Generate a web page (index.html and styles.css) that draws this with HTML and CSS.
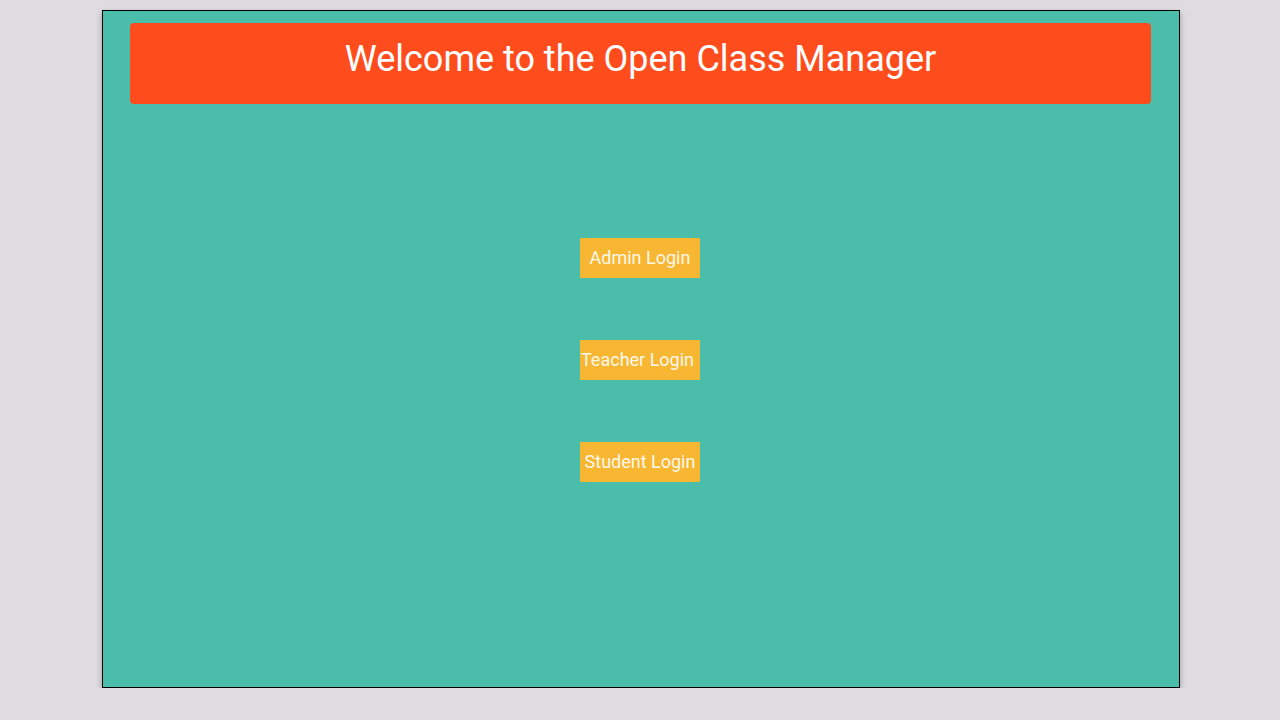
FILE: index.html
```html
<!DOCTYPE html>
<html>
<head>
<meta charset="utf-8">
<link rel="stylesheet" href="styles.css">
</head>
<body>
<div class="frame">
  <header class="banner">
    <h1 class="title">Welcome to the Open Class Manager</h1>
  </header>
  <div class="logins">
    <button class="login">Admin Login</button>
    <button class="login login-wide">Teacher Login</button>
    <button class="login">Student Login</button>
  </div>
</div>
</body>
</html>
```

FILE: styles.css
```css
html, body {
  margin: 0;
  padding: 0;
  background: #dfdce1;
  font-family: Roboto, "Liberation Sans", sans-serif;
}
body {
  padding-top: 10px;
}
.frame {
  box-sizing: border-box;
  width: 1078px;
  height: 678px;
  margin: 0 auto;
  border: 1px solid #000;
  background: #4bbdab;
  box-shadow: 0 3px 6px rgba(0,0,0,0.3);
  padding: 12px 28px 0 27px;
  position: relative;
  left: 1px;
}
.banner {
  background: #ff4c1d;
  border-radius: 4px;
  height: 81px;
  text-align: center;
}
.title {
  margin: 0;
  padding-top: 15px;
  font-size: 36px;
  font-weight: 400;
  line-height: 42px;
  color: #fff;
}
.logins {
  display: flex;
  flex-direction: column;
  align-items: center;
  gap: 62px;
  margin-top: 134px;
  margin-right: 1px;
}
.login {
  width: 120px;
  height: 40px;
  padding: 0 1px 2px;
  border: none;
  border-radius: 0;
  background: #f8b733;
  color: #fdf8ea;
  font-family: Roboto, "Liberation Sans", sans-serif;
  font-size: 18px;
  white-space: nowrap;
}
.login-wide {
  padding-right: 7px;
}
```
